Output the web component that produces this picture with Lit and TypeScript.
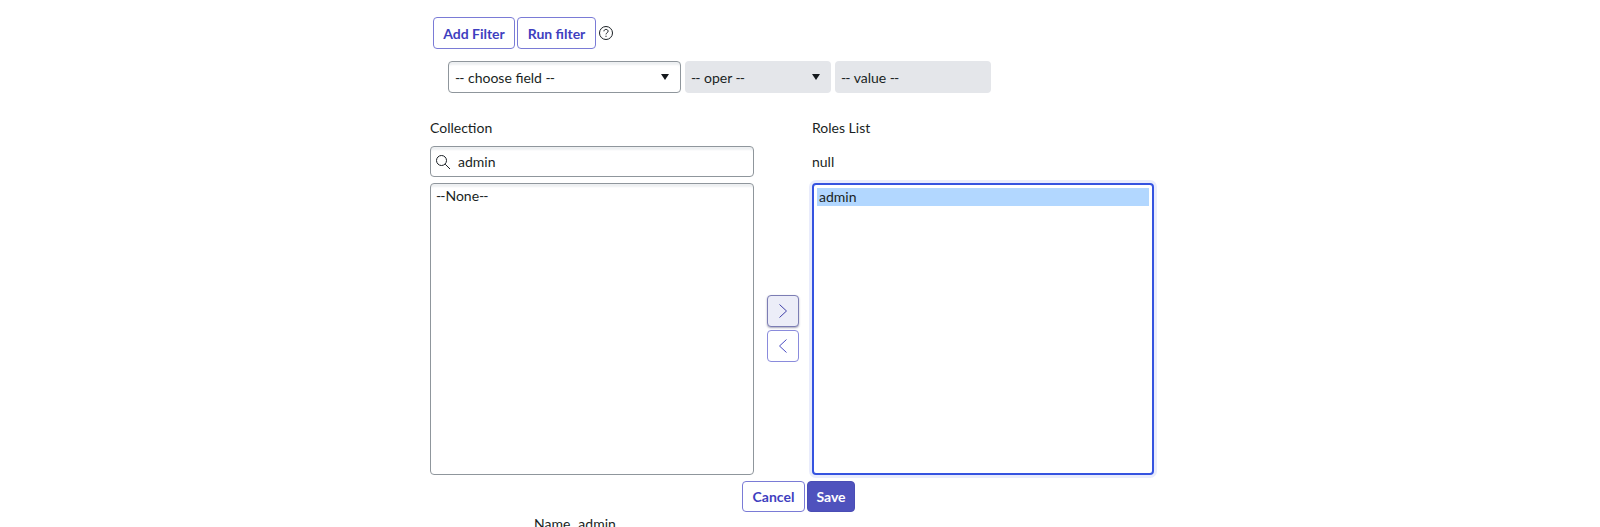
import { LitElement, html, css } from "lit";
import { customElement } from "lit/decorators.js";

@customElement("app-root")
export class AppRoot extends LitElement {
  static styles = css`
    :host { display: block; height: 527px; overflow: hidden; background: #fff; font-family: Lato, "Liberation Sans", sans-serif; font-size: 14px; color: #1a1f24; font-variant-ligatures: common-ligatures; }
    .page { display: flex; flex-direction: column; padding: 17px 0 0 430px; }
    .btn { box-sizing: border-box; height: 32px; border: 1px solid #7a7bd6; border-radius: 4px; background: #fff; color: #3f3fc0; font: 700 14px Lato, sans-serif; padding: 0; display: flex; align-items: center; justify-content: center; }
    .top { display: flex; align-items: center; gap: 2px; margin-left: 3px; height: 32px; }
    .add { width: 82px; }
    .run { width: 79px; }
    .help { display: block; }
    .filters { display: flex; gap: 4px; margin: 12px 0 0 18px; height: 32px; }
    .field { box-sizing: border-box; height: 32px; border-radius: 4px; display: flex; align-items: center; justify-content: space-between; padding: 0 6px; }
    .choose { width: 233px; border: 1px solid #8f969c; box-shadow: inset 0 4px 2px -1px #eef0f2; padding-right: 11px; }
    .oper { width: 146px; background: #e4e6ea; padding-right: 11px; }
    .value { width: 156px; background: #e4e6ea; }
    .dash { letter-spacing: -1px; margin-right: 1px; }
    .caret { width: 0; height: 0; border-left: 4.5px solid transparent; border-right: 4.5px solid transparent; border-top: 6px solid #14181c; }
    .columns { display: flex; margin-top: 24px; }
    .left { width: 324px; display: flex; flex-direction: column; }
    .label { height: 20px; line-height: 22px; }
    .search { box-sizing: border-box; height: 31px; margin-top: 9px; border: 1px solid #8f969c; border-radius: 4px; box-shadow: inset 0 4px 2px -1px #eef0f2; display: flex; align-items: center; gap: 7px; padding-left: 4px; }
    .search svg { display: block; flex: none; }
    .list { box-sizing: border-box; height: 292px; margin-top: 6px; border: 1px solid #8f969c; border-radius: 4px; box-shadow: inset 0 4px 2px -1px #eef0f2; padding: 3px 5px; line-height: 17px; }
    .mover { width: 58px; display: flex; flex-direction: column; align-items: center; justify-content: center; gap: 3px; padding-top: 64px; box-sizing: border-box; }
    .arrow { box-sizing: border-box; width: 32px; height: 32px; border: 1px solid #8a8bdc; border-radius: 4px; background: #fff; display: flex; align-items: center; justify-content: center; padding: 0; }
    .arrow.on { background: #ecedf8; border-color: #7c7db4; box-shadow: 0 1px 2px rgba(40, 40, 90, 0.4); }
    .right { width: 342px; display: flex; flex-direction: column; }
    .null { height: 31px; margin-top: 9px; display: flex; align-items: center; }
    .roles { box-sizing: border-box; height: 292px; margin-top: 6px; border: 2px solid #3553e0; border-radius: 4px; box-shadow: 0 0 0 3px #e9ecfc; padding: 3px; }
    .opt { background: #b2d7ff; height: 18px; line-height: 17px; padding-left: 2px; }
    .actions { display: flex; gap: 2px; margin: 6px 0 0 312px; }
    .cancel { width: 63px; height: 31px; }
    .save { width: 48px; height: 31px; background: #4f52bd; border-color: #4a4db5; color: #fff; }
    .name { display: flex; gap: 8px; margin: 3px 0 0 104px; line-height: 17px; }
  `;

  render() {
    return html`
      <div class="page">
        <div class="top">
          <button class="btn add">Add Filter</button>
          <button class="btn run">Run filter</button>
          <svg class="help" width="16" height="16" viewBox="0 0 16 16" fill="none" stroke="#1a1f24" stroke-width="1">
            <circle cx="8" cy="8" r="6.5"></circle>
            <path d="M5.9 6.3c.1-1.2 1-1.9 2.1-1.9 1.2 0 2.1.8 2.1 1.8 0 1.6-2.1 1.6-2.1 3.2"></path>
            <path d="M8 10.8v1" stroke-width="1.2"></path>
          </svg>
        </div>
        <div class="filters">
          <div class="field choose"><span><span class="dash">--</span> choose field <span class="dash">--</span></span><span class="caret"></span></div>
          <div class="field oper"><span><span class="dash">--</span> oper <span class="dash">--</span></span><span class="caret"></span></div>
          <div class="field value"><span><span class="dash">--</span> value <span class="dash">--</span></span></div>
        </div>
        <div class="columns">
          <div class="left">
            <div class="label">Collection</div>
            <div class="search">
              <svg width="16" height="16" viewBox="0 0 16 16" fill="none" stroke="#1a1f24" stroke-width="1">
                <circle cx="6.5" cy="6.5" r="5"></circle>
                <path d="M10.2 10.2L15 15"></path>
              </svg>
              <span>admin</span>
            </div>
            <div class="list"><span class="dash">--</span>None<span class="dash">--</span></div>
          </div>
          <div class="mover">
            <button class="arrow on" aria-label="Add">
              <svg width="12" height="16" viewBox="0 0 12 16" fill="none" stroke="#3f3fa8" stroke-width="1"><path d="M2.5 1.5L9.5 8L2.5 14.5"></path></svg>
            </button>
            <button class="arrow" aria-label="Remove">
              <svg width="12" height="16" viewBox="0 0 12 16" fill="none" stroke="#4a4cc4" stroke-width="1"><path d="M9.5 1.5L2.5 8L9.5 14.5"></path></svg>
            </button>
          </div>
          <div class="right">
            <div class="label">Roles List</div>
            <div class="null">null</div>
            <div class="roles"><div class="opt">admin</div></div>
          </div>
        </div>
        <div class="actions">
          <button class="btn cancel">Cancel</button>
          <button class="btn save">Save</button>
        </div>
        <div class="name"><span>Name</span><span>admin</span></div>
      </div>
    `;
  }
}
